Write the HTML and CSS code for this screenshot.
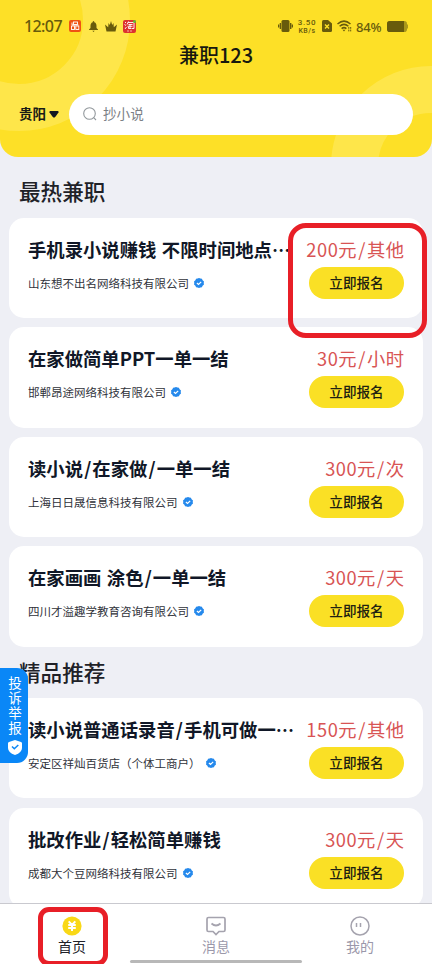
FILE: index.html
```html
<!DOCTYPE html>
<html lang="zh-CN">
<head>
<meta charset="utf-8">
<title>兼职123</title>
<link rel="stylesheet" href="styles.css">
</head>
<body>
<svg width="0" height="0" class="defs"><symbol id="verified" viewBox="0 0 10 10"><path d="M5 0l1.4.6 1.5.2.7 1.4L10 3.5 9.7 5l.3 1.5-1.4 1.3-.7 1.4-1.5.2L5 10l-1.4-.6-1.5-.2-.7-1.4L0 6.5.3 5 0 3.5l1.4-1.3.7-1.4L3.6.6z" fill="#2589ec"/><path d="M2.900 5l1.600 1.500 2.700-2.700" fill="none" stroke="#fff" stroke-width="1.200"/></symbol></svg>
<div class="app">
  <header class="header">
    <svg class="rings" width="432" height="157" viewBox="0 0 432 157" fill="none" stroke="#fee64a" stroke-width="47"><circle cx="19" cy="20" r="87.500"/><circle cx="431" cy="166" r="76.500"/></svg>
    <div class="status">
      <span class="time">12:07</span>
      <svg class="s-app" width="12" height="12" viewBox="0 0 12 12"><rect width="12" height="12" rx="2" fill="#ef5213"/><g fill="none" stroke="#fff" stroke-width=".9"><rect x="4.500" y="2" width="4" height="2.500"/><rect x="2.500" y="6" width="3" height="3.500"/><rect x="6.800" y="6" width="3" height="3.500"/><path d="M3 2.500v2.500h6.500"/></g></svg>
      <svg class="s-bell" width="9" height="11" viewBox="0 0 9 11" fill="#685b0c"><path d="M4.500 0C5.200 0 5.300 1 5.300 1.200 7 1.700 7.500 3.200 7.500 5v2L9 8.500V9H0v-.5L1.500 7V5C1.500 3.200 2 1.700 3.700 1.200 3.700 1 3.800 0 4.500 0zM3.300 9.700h2.400L4.500 11z"/></svg>
      <svg class="s-crown" width="12" height="11" viewBox="0 0 12 11" fill="#685b0c"><path d="M1.500 10.500L0 3.500l3.200 2.700L3.500 2l1.300 2L6 0l1.200 4 1.300-2 .3 4.200L12 3.500l-1.500 7z"/></svg>
      <svg class="s-tao" width="13" height="13" viewBox="0 0 13 13"><rect width="13" height="13" rx="2" fill="#dc3330"/><path d="M2 2l1 1M1.500 4.500l1.500 1M2 9l1.500-2M5.500 1.500L4 4.500M5 2.500h6v6H9M5.500 4.500h4M4.500 6.300h5M7 4v4M5.500 7v1.500h3" fill="none" stroke="#fff" stroke-width=".9"/><path d="M4 11h2M7 11h2" stroke="#f7b2a7"/><circle cx="11.500" cy="1.500" r="1.500" fill="#64b832"/></svg>
      <div class="grow"></div>
      <svg class="s-vib" width="15" height="12" viewBox="0 0 15 12" fill="#685b0c"><rect x="3.500" width="8" height="12" rx="1.500"/><path d="M1.700 3h1.400v6H1.700zM0 4.500h1.200v3H0zM12 3h1.400v6H12zM13.800 4.500H15v3h-1.200z"/></svg>
      <div class="speed"><span>3.50</span><span class="unit">KB/s</span></div>
      <svg class="s-sim" width="10" height="12" viewBox="0 0 10 12"><path d="M1.500 0H6l4 3.500V10.500Q10 12 8.500 12h-7Q0 12 0 10.500v-9Q0 0 1.500 0z" fill="#685b0c"/><path d="M3 4.500l4 4M7 4.500l-4 4" stroke="#ffe228" stroke-width="1.400"/></svg>
      <svg class="s-wifi" width="15" height="12" viewBox="0 0 15 12" fill="none" stroke="#685b0c" stroke-width="1.500"><path d="M.5 4Q7 -1.800 13.500 4M2.600 6.300Q7 2.400 11.400 6.300M4.600 8.600Q7 6.600 9.400 8.600"/><path d="M5.600 9.700h2.800L7 11.500z" fill="#685b0c" stroke="none"/><path d="M11.800 7v4.500M13.700 7v4.500" stroke-width="1" stroke-dasharray="1.800 .8"/></svg>
      <span class="pct">84%</span>
      <svg class="s-bat" width="21" height="11" viewBox="0 0 21 11"><rect width="20" height="11" rx="2.800" fill="#aa981a"/><path d="M2.800 0H17v11H2.800Q0 11 0 8.200V2.800Q0 0 2.800 0z" fill="#685b0c"/><path d="M20.500 3.500v4" stroke="#aa981a"/></svg>
    </div>
    <h1>兼职123</h1>
    <div class="searchrow">
      <span class="city">贵阳</span>
      <svg class="caret" width="10" height="7" viewBox="0 0 10 7"><path d="M1.200 0h7.600Q10 .2 9.500 1.500L6 6.200Q5 7 4 6.200L.5 1.500Q0 .2 1.200 0z" fill="#141821"/></svg>
      <div class="search"><svg width="14" height="14" viewBox="0 0 14 14" fill="none" stroke="#92989c" stroke-width="1.100"><circle cx="6.500" cy="6.500" r="5.800"/><path d="M10.700 10.700l2.300 2.300"/></svg><span>抄小说</span></div>
    </div>
  </header>
  <main class="main">
    <h2>最热兼职</h2>
    <section class="list">
      <article class="card"><div class="info"><h3>手机录小说赚钱 不限时间地点<span class="dots">⋯</span></h3><p>山东想不出名网络科技有限公司<svg><use href="#verified"/></svg></p></div><div class="side"><b>200元<i>/</i>其他</b><button>立即报名</button></div></article>
      <article class="card"><div class="info"><h3>在家做简单PPT一单一结</h3><p>邯郸昂途网络科技有限公司<svg><use href="#verified"/></svg></p></div><div class="side"><b>30元<i>/</i>小时</b><button>立即报名</button></div></article>
      <article class="card"><div class="info"><h3>读小说<i>/</i>在家做<i>/</i>一单一结</h3><p>上海日日晟信息科技有限公司<svg><use href="#verified"/></svg></p></div><div class="side"><b>300元<i>/</i>次</b><button>立即报名</button></div></article>
      <article class="card"><div class="info"><h3>在家画画 涂色<i>/</i>一单一结</h3><p>四川才溢趣学教育咨询有限公司<svg><use href="#verified"/></svg></p></div><div class="side"><b>300元<i>/</i>天</b><button>立即报名</button></div></article>
    </section>
    <h2 class="second">精品推荐</h2>
    <section class="list">
      <article class="card"><div class="info"><h3>读小说普通话录音<i>/</i>手机可做一<span class="dots">⋯</span></h3><p>安定区祥灿百货店（个体工商户）<svg><use href="#verified"/></svg></p></div><div class="side"><b>150元<i>/</i>其他</b><button>立即报名</button></div></article>
      <article class="card"><div class="info"><h3>批改作业<i>/</i>轻松简单赚钱</h3><p>成都大个豆网络科技有限公司<svg><use href="#verified"/></svg></p></div><div class="side"><b>300元<i>/</i>天</b><button>立即报名</button></div></article>
    </section>
  </main>
  <nav class="tabs">
    <div class="tab active"><svg width="20" height="20" viewBox="0 0 20 20"><circle cx="10" cy="10" r="9.600" fill="#f9d817"/><path d="M6.700 5.300L10 9l3.300-3.700M6.200 9h7.600M6.200 12h7.600M10 9v6" fill="none" stroke="#fff" stroke-width="2"/></svg><span>首页</span></div>
    <div class="tab"><svg width="20" height="20" viewBox="0 0 20 20" fill="none" stroke="#a5a3ae" stroke-width="1.700"><path d="M2.500 1.500h15q1.500 0 1.500 1.500v11q0 1.500-1.500 1.500H13L10 18.500 7 15.500H2.500Q1 15.500 1 14V3q0-1.500 1.500-1.500z"/><path d="M5.500 7.500Q10 11.500 14.500 7.500"/></svg><span>消息</span></div>
    <div class="tab"><svg width="20" height="20" viewBox="0 0 20 20" fill="none" stroke="#a5a3ae" stroke-width="1.500"><circle cx="10" cy="10" r="9"/><path d="M6.500 7v4M10.500 7v4"/></svg><span>我的</span></div>
  </nav>
  <div class="homebar"></div>
  <aside class="report"><span>投诉举报</span><svg width="14" height="15" viewBox="0 0 14 15"><path d="M7 0l6 2q1 .3 1 1.300V8q0 4.500-7 7Q0 12.500 0 8V3.300Q0 2.300 1 2z" fill="#fff"/><path d="M4 6.500l2.300 2.300 4-3.800" fill="none" stroke="#0a87f7" stroke-width="1.500"/></svg></aside>
  <div class="mark mark-price"></div>
  <div class="mark mark-home"></div>
</div>
</body>
</html>
```
FILE: styles.css
```css
* { box-sizing: border-box; }
body { margin: 0; font-family: "Noto Sans CJK SC", sans-serif; background: #eeeff5; }
.defs { position: absolute; }
svg { display: block; flex: none; }
h1, h2, h3, p { margin: 0; white-space: nowrap; }
i { font-style: normal; margin: 0 1.1px; }
.app { position: relative; width: 432px; height: 964px; overflow: hidden; display: flex; flex-direction: column; }
.header { position: relative; height: 157px; flex: none; background: #fde027; border-radius: 0 0 18px 18px; overflow: hidden; padding-top: 15px; }
.rings { position: absolute; left: 0; top: 0; }
.status { position: relative; height: 22px; display: flex; align-items: center; padding: 0 24px; color: #685b0c; }
.time { font: 500 16px/22px "Noto Sans", sans-serif; width: 38px; letter-spacing: -.6px; margin-right: 7px; white-space: nowrap; }
.s-bell { margin-left: 8px; }
.s-crown { margin-left: 7px; }
.s-tao { margin-left: 6px; }
.grow { flex: 1; }
.speed { display: flex; flex-direction: column; font: 500 8px/9px Roboto, sans-serif; width: 20px; margin: 0 5px 0 4px; letter-spacing: .6px; text-align: center; white-space: nowrap; }
.speed .unit { font-size: 7px; line-height: 8px; letter-spacing: .5px; }
.s-wifi { margin-left: 5px; }
.pct { font: 500 13px/22px "Noto Sans", sans-serif; margin: 1px 4px 0 4px; width: 27px; white-space: nowrap; letter-spacing: -.2px; }
h1 { position: relative; text-align: center; font-size: 20px; font-weight: 500; line-height: 30px; margin-top: 3px; color: #17180f; }
.searchrow { position: relative; display: flex; align-items: center; margin-top: 23px; padding: 0 19px; height: 42px; }
.city { font-size: 13.500px; font-weight: 700; color: #191b16; width: 30px; white-space: nowrap; margin-top: -2px; }
.search { flex: 1; height: 41px; margin-left: 10px; background: #fff; border-radius: 21px; display: flex; align-items: center; padding-left: 14px; gap: 6px; color: #7b8085; font-size: 13.600px; }
.search span { margin-top: -2px; }
.main { flex: 1; min-height: 0; overflow: hidden; padding: 0 9px; }
h2 { font-size: 21.600px; font-weight: 500; line-height: 32px; margin: 18px 0 11px 10px; color: #202127; }
h2.second { margin: 9px 0 10.500px 10px; }
.list { display: flex; flex-direction: column; gap: 9.300px; }
.card { width: 414px; height: 100.200px; flex: none; background: #fff; border-radius: 15px; display: flex; justify-content: space-between; padding: 16px 19px 0 19px; }
.info { width: 270px; }
h3 { font-size: 18.350px; font-weight: 700; line-height: 30px; color: #101727; word-spacing: 1.300px; }
p { display: flex; align-items: center; gap: 5px; margin-top: 10px; font-size: 11.500px; line-height: 18px; color: #30323a; }
p svg { width: 10px; height: 10px; }
.side { display: flex; flex-direction: column; align-items: flex-end; }
.side b { font-size: 18.300px; font-weight: 400; line-height: 30px; letter-spacing: .5px; margin-right: -.5px; color: #d85454; white-space: nowrap; }
button { width: 95px; height: 32px; margin-top: 3px; border: 0; padding: 0 0 2px; border-radius: 16px; background: #fae025; color: #202111; font: 500 13.600px/28px "Noto Sans CJK SC", sans-serif; }
.tabs { height: 61px; flex: none; background: #fff; border-top: 1px solid #c9c9cf; display: grid; grid-template-columns: repeat(3, 1fr); }
.tab { display: flex; flex-direction: column; align-items: center; padding-top: 12px; font-size: 14px; line-height: 20px; color: #9b98aa; }
.active { color: #202128; }
.homebar { position: absolute; left: 130px; top: 960px; width: 172px; height: 3px; border-radius: 2px; background: #b8b8b8; }
.report { position: absolute; left: 0; top: 668px; width: 28px; height: 95px; background: #0a87f7; border-radius: 0 11px 11px 0; color: #fff; display: flex; flex-direction: column; align-items: center; padding: 8px 0 0 2px; }
.report span { writing-mode: vertical-rl; font-size: 13.500px; line-height: 20px; letter-spacing: 1.500px; height: 60px; white-space: nowrap; }
.report svg { margin-top: 4px; }
.mark { position: absolute; border: 5px solid #e81f27; }
.mark-price { left: 288px; top: 223px; width: 139px; height: 115px; border-radius: 18px; }
.mark-home { left: 38px; top: 907px; width: 70px; height: 59px; border-radius: 11px; }
```
